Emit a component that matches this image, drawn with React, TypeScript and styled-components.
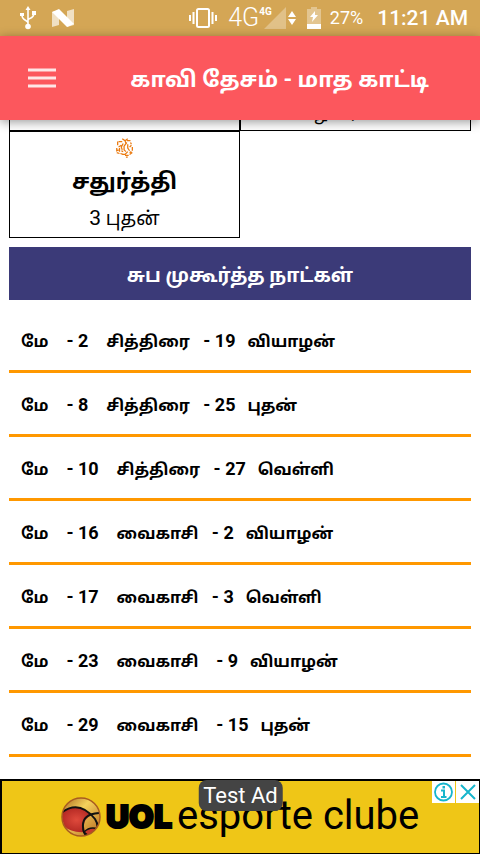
import React from "react";
import styled, { createGlobalStyle } from "styled-components";

const GlobalStyle = createGlobalStyle`
  * { box-sizing: border-box; }
  html, body, #root { height: 100%; }
  body {
    margin: 0;
    background: #fff;
    color: #000;
    font-family: Roboto, "Noto Sans Tamil", "Noto Sans", sans-serif;
  }
`;

const Screen = styled.div`
  display: flex;
  flex-direction: column;
  height: 100vh;
  overflow: hidden;
`;

const StatusBar = styled.div`
  display: flex;
  flex: none;
  align-items: center;
  height: 36px;
  padding: 0 12px 0 20px;
  background: #d4a655;
  color: #fff;
`;

const StatusIcon = styled.svg<{ $gap?: number }>`
  flex: none;
  display: block;
  margin-left: ${(p) => p.$gap ?? 0}px;
`;

const Spacer = styled.div`
  flex: 1;
`;

const Network = styled.span`
  margin-left: 11px;
  font: 300 25px/38px Roboto, sans-serif;
`;

const NetworkSmall = styled.span`
  align-self: flex-start;
  margin-top: 5px;
  font: 700 10px/13px Roboto, sans-serif;
`;

const Signal = styled.div`
  display: flex;
  align-items: center;
  margin-left: -8px;
`;

const Battery = styled.span`
  margin-left: 9px;
  font-size: 18px;
  line-height: 38px;
`;

const Clock = styled.time`
  margin-left: 14px;
  font-size: 21px;
  font-weight: 500;
  line-height: 38px;
`;

const AppBar = styled.header`
  position: relative;
  z-index: 1;
  display: flex;
  flex: none;
  align-items: center;
  height: 84px;
  padding: 0 16px;
  background: #fc575d;
  box-shadow: 0 2px 10px rgba(0, 0, 0, 0.4);
  color: #fff;
`;

const MenuButton = styled.button`
  display: flex;
  padding: 12px;
  border: 0;
  background: none;
  color: #fff;
`;

const Title = styled.h1`
  flex: 1;
  margin: 0;
  padding: 4px 35px 0 0;
  text-align: right;
  font-size: 22px;
  line-height: 36px;
  font-weight: 700;
  white-space: nowrap;
`;

const Content = styled.main`
  flex: 1;
  min-height: 0;
  overflow: hidden;
  padding: 0 9px;
`;

const DayGrid = styled.div`
  display: grid;
  grid-template-columns: repeat(2, minmax(0, 1fr));
  margin-top: -96px;
`;

const DayCell = styled.div`
  display: flex;
  flex-direction: column;
  align-items: center;
  height: 107px;
  padding-top: 5px;
  border: 1px solid #000;
`;

const DayName = styled.div`
  padding-top: 5px;
  font-size: 22px;
  line-height: 36px;
  font-weight: 700;
`;

const DayDate = styled.div`
  font-size: 21px;
  line-height: 36px;
  white-space: nowrap;
`;

const Tamil = styled.span<{ $size: number }>`
  font-size: ${(p) => p.$size}px;
`;

const SectionTitle = styled.h2`
  margin: 9px 0;
  padding-top: 4px;
  background: #3b3a78;
  color: #fff;
  text-align: center;
  font-size: 19px;
  line-height: 49px;
  font-weight: 700;
`;

const DateList = styled.ul`
  margin: 0;
  padding: 0;
  list-style: none;
`;

const DateRow = styled.li`
  height: 64px;
  padding-left: 12px;
  border-bottom: 3px solid #ff9800;
  font-size: 18px;
  line-height: 63px;
  font-weight: 700;
  white-space: pre;
`;

const AdBanner = styled.aside`
  position: relative;
  display: flex;
  flex: none;
  align-items: center;
  height: 75px;
  padding-left: 59px;
  border: 2px solid #000;
  border-right-width: 1px;
  border-bottom-width: 1px;
  background: #efc617;
`;

const Brand = styled.span`
  margin-left: 5px;
  font: 900 32px/60px Inter, sans-serif;
  -webkit-text-stroke: 2px #000;
`;

const Product = styled.span`
  margin-left: 5px;
  padding-bottom: 2px;
  font: 400 40px/60px Roboto, sans-serif;
  white-space: nowrap;
`;

const TestLabel = styled.span`
  position: absolute;
  top: -1px;
  left: 50%;
  transform: translateX(-50%);
  padding: 0 5px;
  border-radius: 8px;
  background: #444;
  color: #fff;
  font-size: 22px;
  line-height: 31px;
  white-space: nowrap;
`;

const AdActions = styled.div`
  position: absolute;
  top: 0;
  right: 0;
  display: flex;
  gap: 1px;
`;

const AdAction = styled.button`
  display: flex;
  padding: 0;
  border: 0;
  background: #fff;
`;

const Ganesha = () => (
  <svg width="20" height="24" viewBox="0 0 20 24" fill="none" stroke="#ea7a10" strokeWidth="1.400" aria-hidden="true">
    <path d="M7 2l3 2 1 3M10 4l3-2M12 4h4M3 5h4M2 5v4M6 9l-3 2M8 7l-2 4 1 3M12 6l-3 4v4l2 2M13 8v4l2 3M16 6l1 2M17 9l-2 2M1 12v3l2-1M4 12v4M1 17l3 1M5 18l3 1M13 16l-3 3H7M15 17l2-1M18 11v4M18 17l-3 2M10 20h4M11 22h2M6 15l2 1" />
  </svg>
);

const dates = [
  "மே    - 2    சித்திரை   - 19   வியாழன்",
  "மே    - 8    சித்திரை   - 25   புதன்",
  "மே    - 10    சித்திரை   - 27   வெள்ளி",
  "மே    - 16    வைகாசி   - 2   வியாழன்",
  "மே    - 17    வைகாசி   - 3   வெள்ளி",
  "மே    - 23    வைகாசி    - 9   வியாழன்",
  "மே    - 29    வைகாசி    - 15   புதன்",
];

const MixedText = ({ text, size }: { text: string; size: number }) => (
  <>
    {text.split(/( *[\u0B80-\u0BFF]+$|[\u0B80-\u0BFF]+)/).map((part, i) =>
      i % 2 ? <Tamil key={i} $size={size}>{part}</Tamil> : part
    )}
  </>
);

export default function App() {
  return (
    <Screen>
      <GlobalStyle />
      <StatusBar>
        <StatusIcon width="16" height="24" viewBox="0 0 16 24" fill="none" stroke="#fff" strokeWidth="1.6">
          <path d="M8 20V3M8 17C8 14 2 15 2 9M8 14C8 12 14 13 14 7" />
          <path d="M8 0l2.5 4h-5zM0 7h4v3H0zM12 5h4v4h-4z" fill="#fff" stroke="none" />
          <circle cx="8" cy="20.5" r="2.8" fill="#fff" stroke="none" />
        </StatusIcon>
        <StatusIcon $gap={16} width="22" height="18" viewBox="0 0 22 18">
          <path d="M0 3l7-2v15l-7 2zM15 2l7-2v16l-7 2z" fill="#fff" opacity=".65" />
          <path d="M0 3l7-3 15 15-7 3z" fill="#fff" />
        </StatusIcon>
        <Spacer />
        <StatusIcon width="28" height="22" viewBox="0 0 28 22" fill="none" stroke="#fff" strokeWidth="2">
          <rect x="8" y="2" width="12" height="18" rx="1.5" />
          <path d="M1 8v6M4.500 5v12M23.500 5v12M27 8v6" />
        </StatusIcon>
        <Network>4G</Network>
        <NetworkSmall>4G</NetworkSmall>
        <Signal>
          <StatusIcon width="22" height="22" viewBox="0 0 22 22">
            <path d="M22 0v22H0z" fill="#fff" opacity=".3" />
          </StatusIcon>
          <StatusIcon $gap={2} width="8" height="14" viewBox="0 0 8 14">
            <path d="M4 0l4 6H0zM0 8h8l-4 6z" fill="#fff" />
          </StatusIcon>
        </Signal>
        <StatusIcon $gap={11} width="14" height="22" viewBox="0 0 14 22">
          <path d="M4 0h6v2h4v15H0V2h4z" fill="#fff" opacity=".35" />
          <path d="M0 17h14v5H0zM8 4l-5 6h3l-1 5 6-7H8z" fill="#fff" />
        </StatusIcon>
        <Battery>27%</Battery>
        <Clock>11:21 AM</Clock>
      </StatusBar>
      <AppBar>
        <MenuButton aria-label="Menu">
          <svg width="28" height="22" viewBox="0 0 28 22" stroke="currentColor" strokeWidth="3">
            <path d="M0 3h28M0 11h28M0 19h28" opacity=".85" />
          </svg>
        </MenuButton>
        <Title>காவி தேசம் - மாத காட்டி</Title>
      </AppBar>
      <Content>
        <DayGrid>
          <DayCell />
          <DayCell>
            <Ganesha />
            <DayName>பிரதோஷம்</DayName>
            <DayDate><MixedText text="2 வியாழன், 16 வெள்ளி" size={18} /></DayDate>
          </DayCell>
          <DayCell>
            <Ganesha />
            <DayName>சதுர்த்தி</DayName>
            <DayDate><MixedText text="3 புதன்" size={19} /></DayDate>
          </DayCell>
        </DayGrid>
        <SectionTitle>சுப முகூர்த்த நாட்கள்</SectionTitle>
        <DateList>
          {dates.map((date) => (
            <DateRow key={date}><MixedText text={date} size={16} /></DateRow>
          ))}
        </DateList>
      </Content>
      <AdBanner>
        <svg width="40" height="42" viewBox="0 0 40 42" aria-hidden="true">
          <defs>
            <linearGradient id="gold" x2="1" y2="1">
              <stop offset="0" stopColor="#a8661c" />
              <stop offset=".4" stopColor="#f4d25c" />
              <stop offset="1" stopColor="#b5651d" />
            </linearGradient>
            <radialGradient id="red">
              <stop offset="0" stopColor="#df4a3c" />
              <stop offset="1" stopColor="#b52a24" />
            </radialGradient>
            <clipPath id="ball"><circle cx="20" cy="21" r="19" /></clipPath>
          </defs>
          <g clipPath="url(#ball)">
            <circle cx="20" cy="21" r="19" fill="url(#gold)" />
            <path d="M0 17Q15 5 31 19Q20 24 24 36Q10 37 3 30z" fill="url(#red)" />
            <path d="M0 17Q18 3 34 23Q38 29 36 36" fill="none" stroke="#111" strokeWidth="2" />
            <path d="M38 17Q21 18 22 31Q22 38 28 42" fill="none" stroke="#111" strokeWidth="2" />
            <path d="M23 36Q29 30 37 33L30 42z" fill="#c63b2b" stroke="#111" strokeWidth="1.500" />
          </g>
          <circle cx="20" cy="21" r="19" fill="none" stroke="#a85b20" strokeWidth="1.500" />
        </svg>
        <Brand>UOL</Brand>
        <Product>esporte clube</Product>
        <TestLabel>Test Ad</TestLabel>
        <AdActions>
          <AdAction aria-label="Ad information">
            <svg width="23" height="22" viewBox="0 0 23 22" fill="none" stroke="#16b5cc">
              <circle cx="11.500" cy="11" r="8.500" strokeWidth="1.800" />
              <path d="M9 9.500h3V16M9 16h5.500" strokeWidth="2" />
              <path d="M10.500 5h2.500v2.500h-2.500z" fill="#16b5cc" stroke="none" />
            </svg>
          </AdAction>
          <AdAction aria-label="Close ad">
            <svg width="23" height="22" viewBox="0 0 23 22" fill="none" stroke="#16b5cc" strokeWidth="2">
              <path d="M5 4l14 14M19 4L5 18" />
            </svg>
          </AdAction>
        </AdActions>
      </AdBanner>
    </Screen>
  );
}
